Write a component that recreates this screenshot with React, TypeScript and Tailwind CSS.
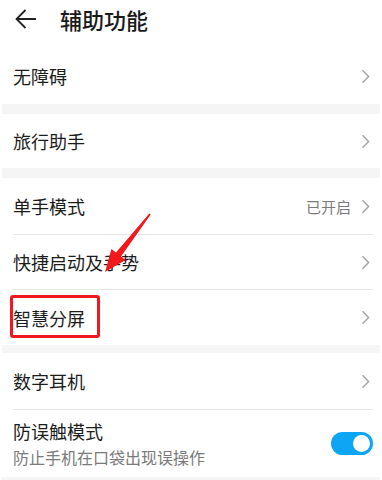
import { ReactNode } from "react"

const font = { fontFamily: '"Noto Sans CJK SC", "Noto Sans", sans-serif' }

function Chevron() {
  return (
    <svg width="9" height="15" viewBox="0 0 9 15" className="shrink-0">
      <path d="M1.5 1.2 L7.6 7.5 L1.5 13.8" fill="none" stroke="#a3a3a3" strokeWidth="1.4" />
    </svg>
  )
}

function Band({ h = "h-[10px]" }: { h?: string }) {
  return <div className={`${h} mx-[2px] bg-[#f5f5f5]`} />
}

function Divider() {
  return <div className="ml-[13px] mr-[9px] h-px bg-[#e6e6e6]" />
}

function Row({
  label,
  value,
  h = "h-[55px]",
  children,
}: {
  label: ReactNode
  value?: string
  h?: string
  children?: ReactNode
}) {
  return (
    <div className={`relative flex ${h} items-center pl-[13px] pr-[12px]`}>
      <span className="flex-1 text-[18px] leading-none text-[#1c1c1c]">{label}</span>
      {value && <span className="mr-[10px] text-[15px] leading-none text-[#7a7a7a]">{value}</span>}
      <Chevron />
      {children}
    </div>
  )
}

export default function App() {
  return (
    <div className="relative h-[480px] w-[382px] overflow-hidden bg-white" style={font}>
      {/* Header */}
      <div className="flex h-[48px] items-center pb-[10px]">
        <svg width="24" height="22" viewBox="0 0 24 22" className="ml-[14px]">
          <path d="M22 11 H2.5 M11.5 2 L2.5 11 L11.5 20" fill="none" stroke="#222" strokeWidth="1.8" />
        </svg>
        <h1 className="ml-[22px] text-[22px] font-medium leading-none text-[#1a1a1a]">辅助功能</h1>
      </div>

      <Row label="无障碍" h="h-[56px]" />
      <Band />
      <Row label="旅行助手" h="h-[54px]" />
      <Band />
      <Row label="单手模式" value="已开启" h="h-[56px]" />
      <Divider />
      <Row label="快捷启动及手势" h="h-[54px]" />
      <Divider />
      <Row label="智慧分屏" h="h-[55px]">
        <div className="absolute left-[10px] top-[5px] h-[43px] w-[90px] rounded-[3px] border-[3px] border-[#f2161e]" />
      </Row>
      <Band h="h-[8px]" />
      <Row label="数字耳机" h="h-[56px]" />
      <Divider />

      {/* Toggle row */}
      <div className="flex h-[67px] items-center pl-[13px] pr-[9px]">
        <div className="flex flex-1 flex-col gap-[9px]">
          <span className="text-[18px] leading-none text-[#1c1c1c]">防误触模式</span>
          <span className="text-[16px] leading-none text-[#7a7a7a]">防止手机在口袋出现误操作</span>
        </div>
        <div className="flex h-[23px] w-[42px] items-center justify-end rounded-full bg-[#0ea6f4] pr-[3px]">
          <div className="h-[17px] w-[17px] rounded-full bg-white" />
        </div>
      </div>
      <Band h="h-[3px]" />

      {/* Annotation arrow */}
      <svg
        width="382"
        height="480"
        viewBox="0 0 382 480"
        className="pointer-events-none absolute left-0 top-0"
      >
        <polygon
          points="150.7,214.6 121,256.6 125.6,260.1 105,272 111.4,249.1 116,252.6 149.3,213.4"
          fill="#f0191c"
        />
      </svg>
    </div>
  )
}
